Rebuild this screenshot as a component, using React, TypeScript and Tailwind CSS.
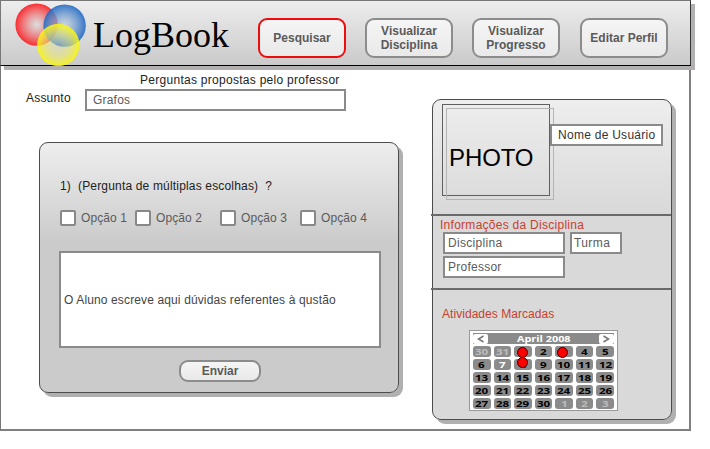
import type { ReactNode } from 'react';
import clsx from 'clsx';

function Logo() {
  return (
    <svg className="ml-[14px] mt-[2px] block h-[64px] w-[74px] shrink-0" viewBox="15 3 74 64">
      <defs>
        <radialGradient id="red">
          <stop offset="0" stopColor="#dcdcdc" stopOpacity="0.7" />
          <stop offset="1" stopColor="#fb2227" stopOpacity="0.94" />
        </radialGradient>
        <radialGradient id="blue">
          <stop offset="0" stopColor="#c4d0de" stopOpacity="0.6" />
          <stop offset="1" stopColor="#2169c4" stopOpacity="0.9" />
        </radialGradient>
        <radialGradient id="yellow">
          <stop offset="0" stopColor="#dcdcb0" stopOpacity="0.4" />
          <stop offset="0.55" stopColor="#ecea70" stopOpacity="0.6" />
          <stop offset="1" stopColor="#fcf808" stopOpacity="0.88" />
        </radialGradient>
      </defs>
      <circle cx="36.6" cy="24.6" r="21.2" fill="url(#red)" />
      <circle cx="64.6" cy="25.6" r="21.2" fill="url(#blue)" />
      <circle cx="58.3" cy="45" r="21.2" fill="url(#yellow)" />
    </svg>
  );
}

function NavButton({ children, active, className }: { children: ReactNode; active?: boolean; className?: string }) {
  return (
    <button
      className={clsx(
        'flex h-[40px] w-[88px] shrink-0 items-center justify-center rounded-[9px] border-2 bg-linear-to-b from-[#f5f5f5] to-[#e9e9e9] text-center text-[12px] leading-[14px] font-bold text-[#5a5a5a]',
        active ? 'border-[#ee0d0d]' : 'border-[#8c8c8c]',
        className,
      )}
    >
      <span>{children}</span>
    </button>
  );
}

function Field({ children, className }: { children: ReactNode; className: string }) {
  return <div className={clsx('flex h-[22px] items-center border-2 border-[#8a8a8a] bg-white text-[#5a5a5a]', className)}>{children}</div>;
}

function Option({ label, className }: { label: string; className: string }) {
  return (
    <label className={clsx('flex shrink-0 items-start', className)}>
      <span className="size-[16px] rounded-[2px] border-2 border-[#888] bg-white" />
      <span className="ml-[5px] mt-px tracking-[0.1px]">{label}</span>
    </label>
  );
}

const days = [30, 31, 1, 2, 3, 4, 5, 6, 7, 8, 9, 10, 11, 12, 13, 14, 15, 16, 17, 18, 19, 20, 21, 22, 23, 24, 25, 26, 27, 28, 29, 30, 1, 2, 3];

function dayColor(index: number) {
  if (index < 2 || index > 31) return 'text-[#bdbdbd]';
  return index === 8 ? 'text-white' : 'text-black';
}

function Calendar() {
  return (
    <div className="relative ml-[36px] mt-[9px] h-[81px] w-[149px] border border-[#999] bg-white px-[3px] pt-[2px] font-['Open_Sans',sans-serif] font-bold">
      <div className="flex h-[11px] w-[141px] items-center justify-between bg-[#8a8a8a]">
        <span className="flex h-[10px] w-[15px] items-center justify-center rounded-[2px] bg-white">
          <svg className="h-[8px] w-[8px]" viewBox="0 0 8 8" fill="none" stroke="#777" strokeWidth="1.6"><path d="M6.5 1 1.5 4l5 3" /></svg>
        </span>
        <span className="scale-x-[1.36] text-[8px] leading-[11px] text-white">April 2008</span>
        <span className="flex h-[10px] w-[15px] items-center justify-center rounded-[2px] bg-white">
          <svg className="h-[8px] w-[8px]" viewBox="0 0 8 8" fill="none" stroke="#777" strokeWidth="1.6"><path d="m1.5 1 5 3-5 3" /></svg>
        </span>
      </div>
      <div className="mt-[2px] grid w-[141px] grid-cols-7 gap-x-[3px] gap-y-[2px]">
        {days.map((day, i) => (
          <span key={i} className={clsx('flex h-[11px] items-center justify-center rounded-[3px] bg-[#8b8b8b] text-[8px] leading-[11px]', dayColor(i))}>
            <span className="scale-x-[1.45]">{day}</span>
          </span>
        ))}
      </div>
      <span className="absolute left-[47px] top-[16px] size-[11px] rounded-full border border-[#300] bg-[#f00]" />
      <span className="absolute left-[47px] top-[26px] size-[11px] rounded-full border border-[#300] bg-[#f00]" />
      <span className="absolute left-[87px] top-[16px] size-[11px] rounded-full border border-[#300] bg-[#f00]" />
    </div>
  );
}

export default function App() {
  return (
    <div className="h-[449px] w-[710px] overflow-hidden bg-white font-['Liberation_Sans',Arial,sans-serif] text-[12px] leading-[14px] whitespace-nowrap text-[#222]">
      <header className="relative z-10 flex h-[66px] w-[691px] border border-t-[#777] border-r-[#333] border-b-black border-l-[#777] bg-linear-to-b from-[#ededed] to-[#cacaca] shadow-[4px_4px_0_#b3b0b1]">
        <Logo />
        <h1 className="ml-[4px] mt-[13px] w-[165px] shrink-0 font-['Liberation_Serif','Times_New_Roman',serif] text-[36px] leading-[42px] text-black">LogBook</h1>
        <div className="flex pt-[17px]">
          <NavButton active>Pesquisar</NavButton>
          <NavButton className="ml-[19px]">Visualizar<br />Disciplina</NavButton>
          <NavButton className="ml-[19px]">Visualizar<br />Progresso</NavButton>
          <NavButton className="ml-[20px]">Editar Perfil</NavButton>
        </div>
      </header>
      <main className="flex h-[365px] w-[691px] border-r-2 border-b-2 border-l border-r-[#7f7f7f] border-b-[#7f7f7f] border-l-[#777]">
        <section className="w-[431px] shrink-0 pt-[7px]">
          <p className="ml-[139px] tracking-[0.28px]">Perguntas propostas pelo professor</p>
          <div className="mt-[2px] flex items-start">
            <span className="ml-[25px] mt-[2px] w-[59px] tracking-[0.2px]">Assunto</span>
            <Field className="w-[261px] pl-[6px] tracking-[0.2px]">Grafos</Field>
          </div>
          <div className="ml-[38px] mt-[31px] h-[251px] w-[360px] rounded-[9px] border border-[#4c4c4c] bg-linear-to-b from-[#eee] to-[#cbcbcb] to-40% shadow-[4px_4px_0_#b0b0b0]">
            <p className="ml-[20px] mt-[36px] tracking-[0.17px] whitespace-pre">1)  (Pergunta de múltiplas escolhas)  ?</p>
            <div className="ml-[20px] mt-[17px] flex text-[#5a5a5a]">
              <Option label="Opção 1" className="w-[75px]" />
              <Option label="Opção 2" className="w-[85px]" />
              <Option label="Opção 3" className="w-[80px]" />
              <Option label="Opção 4" className="w-[70px]" />
            </div>
            <div className="ml-[19px] mt-[25px] flex h-[97px] w-[322px] items-center border-2 border-[#8a8a8a] bg-white pl-[3px] tracking-[0.13px] text-[#444]">
              O Aluno escreve aqui dúvidas referentes à qustão
            </div>
            <button className="ml-[139px] mt-[12px] flex h-[22px] w-[82px] items-center justify-center rounded-[9px] border-2 border-[#8c8c8c] bg-linear-to-b from-[#f5f5f5] to-[#e9e9e9] font-bold text-[#5a5a5a]">
              Enviar
            </button>
          </div>
        </section>
        <aside className="mt-[33px] h-[321px] w-[240px] shrink-0 rounded-[9px] border border-[#4c4c4c] bg-linear-to-b from-[#eee] to-[#d9d9d9] to-35% shadow-[4px_4px_0_#b0b0b0]">
          <div className="flex h-[114px] items-start">
            <div className="relative ml-[9px] mt-[4px] h-[92px] w-[108px] border border-[#606060] pl-[6px] pt-[39px] text-[24px] leading-[28px] tracking-[-0.1px] text-black">
              PHOTO
              <span className="absolute left-[3px] top-[3px] h-[92px] w-[108px] border border-[#b4b4b4]" />
            </div>
            <Field className="relative mt-[24px] w-[113px] pl-[6px] tracking-[0.27px] text-[#333]!">Nome de Usuário</Field>
          </div>
          <div className="-ml-[2px] h-[2px] bg-[#6a6a6a]" />
          <h2 className="ml-[7px] mt-[2px] tracking-[0.27px] text-[#c8402f]">Informações da Disciplina</h2>
          <div className="ml-[10px] flex">
            <Field className="w-[122px] pl-[3px] tracking-[0.3px]">Disciplina</Field>
            <Field className="ml-[5px] w-[52px] pl-[2px] tracking-[0.4px]">Turma</Field>
          </div>
          <Field className="ml-[10px] mt-[2px] w-[122px] pl-[3px] tracking-[0.25px]">Professor</Field>
          <div className="-ml-[2px] mt-[10px] h-[2px] bg-[#6a6a6a]" />
          <h2 className="ml-[9px] mt-[17px] tracking-[0.05px] text-[#c8402f]">Atividades Marcadas</h2>
          <Calendar />
        </aside>
      </main>
    </div>
  );
}
